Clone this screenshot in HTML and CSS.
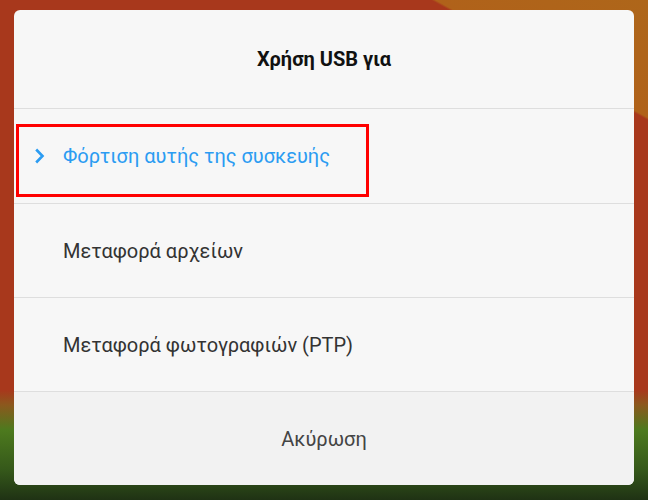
FILE: index.html
```html
<!DOCTYPE html>
<html lang="el">
<head>
  <meta charset="UTF-8" />
  <title>Χρήση USB για</title>
  <meta name="viewport" content="width=device-width, initial-scale=1" />
  <link rel="stylesheet" href="styles.css">
</head>
<body>
  <div class="dialog">
    <div class="dialog-title">Χρήση USB για</div>
    <ul class="options">
      <li class="option selected">
        <svg class="chevron" width="11" height="16" viewBox="0 0 11 16">
          <path d="M2.2 1.5 L8.5 8 L2.2 14.5" fill="none" stroke="#2b9cf2" stroke-width="2.6" />
        </svg>
        <span>Φόρτιση αυτής της συσκευής</span>
        <div class="highlight"></div>
      </li>
      <li class="option">Μεταφορά αρχείων</li>
      <li class="option">Μεταφορά φωτογραφιών (PTP)</li>
    </ul>
    <div class="dialog-footer">Ακύρωση</div>
  </div>
</body>
</html>
```

FILE: styles.css
```css
:root {
  --card: #f7f7f7;
  --footer: #f2f2f2;
  --divider: #dedede;
  --text: #333333;
  --accent: #2b9cf2;
}
html, body {
  height: 100%;
}
body {
  margin: 0;
  padding: 10px 14px;
  box-sizing: border-box;
  font-family: Roboto, "Noto Sans", sans-serif;
  background:
    linear-gradient(to bottom, transparent 0, transparent 390px, rgba(120, 110, 30, 0.6) 405px, #4d7a1e 430px, #35581a 470px, #1f3214 500px),
    linear-gradient(29deg, transparent 0, transparent 86%, #b0621a 86.3%, #ae661a 100%),
    #a8381c;
}
.dialog {
  width: 620px;
  height: 475px;
  background: var(--card);
  border-radius: 6px;
  overflow: hidden;
  display: flex;
  flex-direction: column;
}
.dialog-title {
  height: 98px;
  border-bottom: 1px solid var(--divider);
  display: flex;
  align-items: center;
  justify-content: center;
  font-size: 20px;
  font-weight: bold;
  color: #111;
}
.options {
  list-style: none;
  margin: 0;
  padding: 0;
}
.option {
  position: relative;
  height: 93px;
  border-bottom: 1px solid var(--divider);
  display: flex;
  align-items: center;
  padding-left: 49px;
  font-size: 20px;
  color: var(--text);
}
.option:first-child {
  height: 94px;
}
.option.selected {
  color: var(--accent);
  padding-left: 20px;
}
.chevron {
  margin-right: 18px;
}
.highlight {
  position: absolute;
  left: 2px;
  top: 15px;
  width: 347px;
  height: 67px;
  border: 3px solid #ff0000;
}
.dialog-footer {
  flex: 1;
  background: var(--footer);
  display: flex;
  align-items: center;
  justify-content: center;
  font-size: 20px;
  color: #444;
}
```
